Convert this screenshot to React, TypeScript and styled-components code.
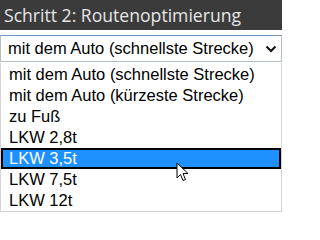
import React from "react";
import styled, { createGlobalStyle } from "styled-components";

const GlobalStyle = createGlobalStyle`
  html, body {
    margin: 0;
    padding: 0;
    background: #ffffff;
  }
  body {
    font-family: "Liberation Sans", Arial, sans-serif;
  }
`;

const Panel = styled.div`
  position: relative;
  width: 282px;
  height: 215px;
  overflow: hidden;
  background: #ffffff;
`;

const Header = styled.div`
  height: 30px;
  background: #3b3b3b;
  color: #e6e6e6;
  font-family: "Open Sans", "DejaVu Sans", sans-serif;
  font-size: 17.6px;
  line-height: 30px;
  padding-left: 4px;
  white-space: nowrap;
`;

const SelectBox = styled.div`
  margin-top: 5px;
  width: 280px;
  height: 25px;
  box-sizing: content-box;
  border: 1px solid #b5bfca;
  border-top-color: #6f93b8;
  display: flex;
  align-items: center;
  justify-content: space-between;
  font-size: 16.5px;
  color: #000;
`;

const SelectText = styled.span`
  padding-left: 7px;
  white-space: nowrap;
`;

const Chevron = styled.svg`
  width: 12px;
  height: 8px;
  margin-right: 4px;
`;

const List = styled.ul`
  list-style: none;
  margin: 1px 0 0;
  padding: 1px 0 0;
  width: 280px;
  border: 1px solid #d4d4d4;
  border-top: none;
  box-sizing: content-box;
`;

interface OptionProps {
  selected?: boolean;
}

const Option = styled.li<OptionProps>`
  height: 21px;
  line-height: ${(p) => (p.selected ? "17px" : "21px")};
  font-size: 16.5px;
  padding-left: ${(p) => (p.selected ? "6px" : "8px")};
  white-space: nowrap;
  color: ${(p) => (p.selected ? "#ffffff" : "#000000")};
  background: ${(p) => (p.selected ? "#1e90ff" : "transparent")};
  border: ${(p) => (p.selected ? "2px solid #000000" : "none")};
  box-sizing: border-box;
`;

const Cursor = styled.svg`
  position: absolute;
  left: 176px;
  top: 162px;
  width: 14px;
  height: 22px;
`;

const options = [
  "mit dem Auto (schnellste Strecke)",
  "mit dem Auto (kürzeste Strecke)",
  "zu Fuß",
  "LKW 2,8t",
  "LKW 3,5t",
  "LKW 7,5t",
  "LKW 12t",
];

export default function App() {
  return (
    <Panel>
      <GlobalStyle />
      <Header>Schritt 2: Routenoptimierung</Header>
      <SelectBox>
        <SelectText>mit dem Auto (schnellste Strecke)</SelectText>
        <Chevron viewBox="0 0 12 8">
          <path d="M1.5 1.5 L6 6 L10.5 1.5" fill="none" stroke="#111" strokeWidth="2" />
        </Chevron>
      </SelectBox>
      <List>
        {options.map((o) => (
          <Option key={o} selected={o === "LKW 3,5t"}>
            {o}
          </Option>
        ))}
      </List>
      <Cursor viewBox="0 0 14 22">
        <path
          d="M1 1 L1 16 L4.5 12.5 L7 18.5 L9.5 17.5 L7 11.5 L12 11.5 Z"
          fill="#ffffff"
          stroke="#000000"
          strokeWidth="1"
        />
      </Cursor>
    </Panel>
  );
}
